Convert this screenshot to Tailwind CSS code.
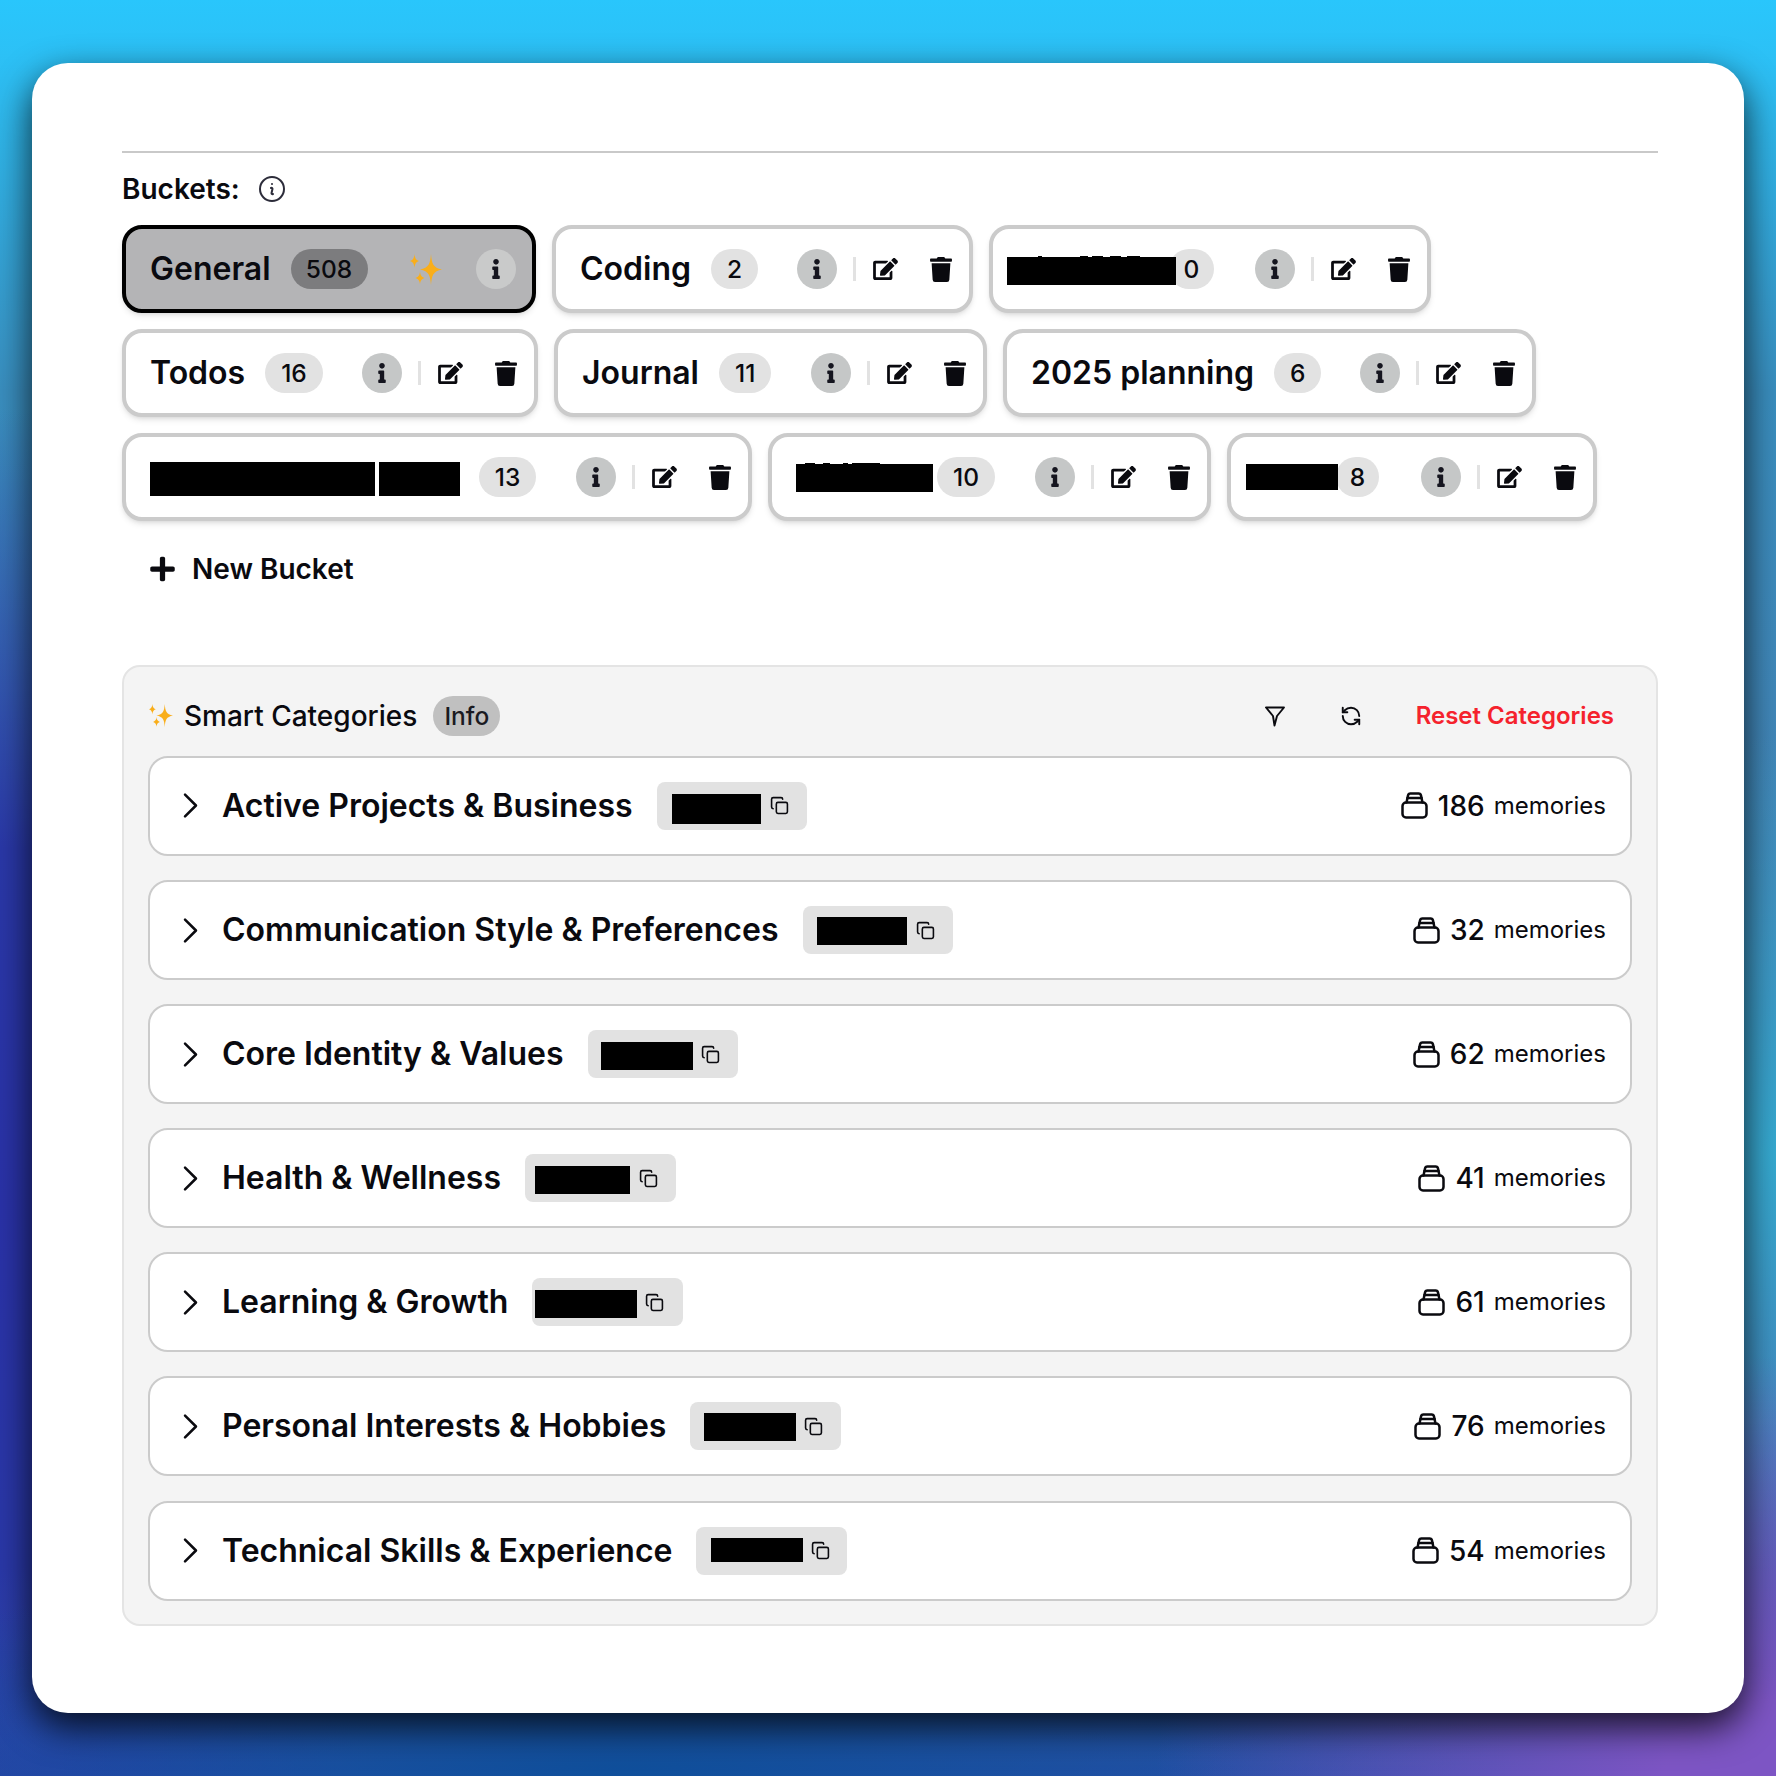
<!DOCTYPE html>
<html>
<head>
<meta charset="utf-8">
<script src="https://cdn.jsdelivr.net/npm/@tailwindcss/browser@4"></script>
</head>
<body class="m-0">
<svg class="hidden" xmlns="http://www.w3.org/2000/svg">
  <symbol id="fi" viewBox="0 0 192 512"><path fill="currentColor" d="M20 424.229h20V279.771H20c-11.046 0-20-8.954-20-20V212c0-11.046 8.954-20 20-20h112c11.046 0 20 8.954 20 20v212.229h20c11.046 0 20 8.954 20 20V492c0 11.046-8.954 20-20 20H20c-11.046 0-20-8.954-20-20v-47.771c0-11.046 8.954-20 20-20zM96 0C56.235 0 24 32.235 24 72s32.235 72 72 72 72-32.235 72-72S135.764 0 96 0z"/></symbol>
  <symbol id="fe" viewBox="0 0 576 512"><path fill="currentColor" d="M402.6 83.2l90.2 90.2c3.8 3.8 3.8 10 0 13.8L274.4 405.6l-92.8 10.3c-12.4 1.4-22.9-9.1-21.5-21.5l10.3-92.8L388.8 83.2c3.8-3.8 10-3.8 13.8 0zm162-22.9l-48.8-48.8c-15.2-15.2-39.9-15.2-55.2 0l-35.4 35.4c-3.8 3.8-3.8 10 0 13.8l90.2 90.2c3.8 3.8 10 3.8 13.8 0l35.4-35.4c15.2-15.3 15.2-40 0-55.2zM384 346.2V448H64V128h229.8c3.2 0 6.2-1.3 8.5-3.5l40-40c7.6-7.6 2.2-20.5-8.5-20.5H48C21.5 64 0 85.5 0 112v352c0 26.5 21.5 48 48 48h352c26.5 0 48-21.5 48-48V306.2c0-10.7-12.9-16-20.5-8.5l-40 40c-2.2 2.3-3.5 5.3-3.5 8.5z"/></symbol>
  <symbol id="ft" viewBox="0 0 448 512"><path fill="currentColor" d="M432 32H312l-9.4-18.7A24 24 0 0 0 281.1 0H166.8a23.72 23.72 0 0 0-21.4 13.3L136 32H16A16 16 0 0 0 0 48v32a16 16 0 0 0 16 16h416a16 16 0 0 0 16-16V48a16 16 0 0 0-16-16zM53.2 467a48 48 0 0 0 47.9 45h245.8a48 48 0 0 0 47.9-45L416 128H32z"/></symbol>
  <symbol id="sp" viewBox="0 0 32 31"><path fill="currentColor" d="M21 0 C21.8 10 23 13.5 32 15.5 C23 17.5 21.8 21 21 31 C20.2 21 19 17.5 10 15.5 C19 13.5 20.2 10 21 0Z M4.5 0 C4.9 4 5.6 5.6 9 7 C5.6 8.4 4.9 10 4.5 14 C4.1 10 3.4 8.4 0 7 C3.4 5.6 4.1 4 4.5 0Z M10 17.5 C10.3 21 11.2 22.6 14.5 24 C11.2 25.4 10.3 27 10 30.5 C9.7 27 8.8 25.4 5.5 24 C8.8 22.6 9.7 21 10 17.5Z"/></symbol>
  <symbol id="cv" viewBox="0 0 24 24"><path fill="none" stroke="currentColor" stroke-width="1.75" stroke-linecap="round" stroke-linejoin="round" d="m8.25 4.5 7.5 7.5-7.5 7.5"/></symbol>
  <symbol id="cp" viewBox="0 0 24 24"><g fill="none" stroke="currentColor" stroke-width="2" stroke-linecap="round" stroke-linejoin="round"><rect width="14" height="14" x="8" y="8" rx="2"/><path d="M4 16c-1.1 0-2-.9-2-2V4c0-1.1.9-2 2-2h10c1.1 0 2 .9 2 2"/></g></symbol>
  <symbol id="bk" viewBox="0 0 27 27"><g fill="none" stroke="currentColor" stroke-width="2.5" stroke-linecap="round" stroke-linejoin="round"><rect x="1.5" y="10.5" width="24" height="15" rx="3.5"/><path d="M5.5 10.5 L7 3.5 a2.5 2.5 0 0 1 2.5-2 h8 a2.5 2.5 0 0 1 2.5 2 L21.5 10.5"/><path d="M6.5 6 H20.5"/></g></symbol>
</svg>
<div class="w-[1776px] h-[1776px] pt-[63px] pl-[32px] font-['Inter',sans-serif] text-[#0a0a0f] bg-[radial-gradient(ellipse_620px_420px_at_100%_100%,#7d55c4_0%,#7d55c4_18%,transparent_100%),radial-gradient(ellipse_900px_230px_at_35%_100%,#0f4f9b_0%,transparent_100%),radial-gradient(ellipse_500px_800px_at_0%_68%,#2a32a8_0%,#2a38a8_45%,transparent_100%),radial-gradient(ellipse_300px_420px_at_100%_65%,#36abd2_0%,transparent_100%),linear-gradient(180deg,#29c6fc_0%,#2cc1f6_3%,#3a8fc0_22%,#4585b8_50%,#4a78b8_80%,#2a50a8_100%)]">
  <div class="w-[1712px] h-[1650px] bg-white rounded-[36px] shadow-[0_14px_36px_rgba(0,0,0,0.8)] pt-[88px] pl-[90px] pr-[86px]">
    <div class="h-[2px] bg-[#c9c9c9]"></div>

    <div class="flex items-center h-[34px] mt-[19px]">
      <span class="text-[28px] leading-none font-semibold">Buckets:</span>
      <svg class="w-[32px] h-[32px] ml-[16px] text-[#2c2c3a]" viewBox="0 0 24 24" fill="none" stroke="currentColor" stroke-width="1.5" stroke-linecap="round" stroke-linejoin="round"><path d="m11.25 11.25.041-.02a.75.75 0 0 1 1.063.852l-.708 2.836a.75.75 0 0 0 1.063.853l.041-.021M21 12a9 9 0 1 1-18 0 9 9 0 0 1 18 0Zm-9-3.75h.008v.008H12V8.25Z"/></svg>
    </div>

    <div class="flex flex-wrap gap-x-[16px] gap-y-[16.2px] mt-[19px]">
      <!-- General -->
      <div class="flex items-center w-[414px] h-[88px] pl-[24px] pr-[16px] border-[4px] border-black rounded-[20px] bg-[#b4b4b6] shadow-md">
        <span class="text-[32px] font-semibold leading-none">General</span>
        <span class="ml-[20px] h-[40px] w-[77px] flex items-center justify-center rounded-full bg-[#7c7c7e] text-[24.5px] font-medium">508</span>
        <svg class="ml-auto w-[32px] h-[31px] text-[#f9ae1a]"><use href="#sp"/></svg>
        <span class="ml-[34px] w-[40px] h-[40px] rounded-full bg-[#c9caca] flex items-center justify-center text-[#15151f]"><svg class="w-[8px] h-[20px]"><use href="#fi"/></svg></span>
      </div>
      <!-- Coding -->
      <div class="flex items-center w-[421px] h-[88px] pl-[24px] pr-[17px] border-[4px] border-[#cbcbcb] rounded-[20px] bg-white shadow-md">
        <span class="text-[32px] font-semibold leading-none">Coding</span>
        <span class="ml-[20px] h-[40px] px-[16px] flex items-center rounded-full bg-[#e2e2e2] text-[24.5px] font-medium">2</span>
        <div class="ml-auto flex items-center">
          <span class="w-[40px] h-[40px] rounded-full bg-[#c5c7c7] flex items-center justify-center text-[#15151f]"><svg class="w-[8px] h-[20px]"><use href="#fi"/></svg></span>
          <span class="ml-[16px] w-[3px] h-[24px] bg-[#e2e2e2]"></span>
          <svg class="ml-[17px] w-[25px] h-[22px]"><use href="#fe"/></svg>
          <svg class="ml-[32px] w-[22px] h-[25px]"><use href="#ft"/></svg>
        </div>
      </div>
      <!-- Redacted 0 -->
      <div class="flex items-center w-[442px] h-[88px] pl-[24px] pr-[17px] border-[4px] border-[#cbcbcb] rounded-[20px] bg-white shadow-md">
        <span class="relative z-10 -ml-[10px] mt-[4px] w-[169px] h-[28px] bg-black">
          <i class="absolute -top-[1.5px] left-[31px] w-[4px] h-[1.5px] bg-black"></i>
          <i class="absolute -top-[1.5px] left-[73px] w-[8px] h-[1.5px] bg-black"></i>
          <i class="absolute -top-[1.5px] left-[85px] w-[11px] h-[1.5px] bg-black"></i>
          <i class="absolute -top-[1.5px] left-[103px] w-[11px] h-[1.5px] bg-black"></i>
          <i class="absolute -top-[1.5px] left-[120px] w-[13px] h-[1.5px] bg-black"></i>
        </span>
        <span class="-ml-[7px] h-[40px] w-[45px] flex items-center justify-center rounded-full bg-[#e2e2e2] text-[24.5px] font-medium">0</span>
        <div class="ml-auto flex items-center">
          <span class="w-[40px] h-[40px] rounded-full bg-[#c5c7c7] flex items-center justify-center text-[#15151f]"><svg class="w-[8px] h-[20px]"><use href="#fi"/></svg></span>
          <span class="ml-[16px] w-[3px] h-[24px] bg-[#e2e2e2]"></span>
          <svg class="ml-[17px] w-[25px] h-[22px]"><use href="#fe"/></svg>
          <svg class="ml-[32px] w-[22px] h-[25px]"><use href="#ft"/></svg>
        </div>
      </div>
      <!-- Todos -->
      <div class="flex items-center w-[416px] h-[88px] pl-[24px] pr-[17px] border-[4px] border-[#cbcbcb] rounded-[20px] bg-white shadow-md">
        <span class="text-[32px] font-semibold leading-none">Todos</span>
        <span class="ml-[20px] h-[40px] px-[16px] flex items-center rounded-full bg-[#e2e2e2] text-[24.5px] font-medium">16</span>
        <div class="ml-auto flex items-center">
          <span class="w-[40px] h-[40px] rounded-full bg-[#c5c7c7] flex items-center justify-center text-[#15151f]"><svg class="w-[8px] h-[20px]"><use href="#fi"/></svg></span>
          <span class="ml-[16px] w-[3px] h-[24px] bg-[#e2e2e2]"></span>
          <svg class="ml-[17px] w-[25px] h-[22px]"><use href="#fe"/></svg>
          <svg class="ml-[32px] w-[22px] h-[25px]"><use href="#ft"/></svg>
        </div>
      </div>
      <!-- Journal -->
      <div class="flex items-center w-[433px] h-[88px] pl-[24px] pr-[17px] border-[4px] border-[#cbcbcb] rounded-[20px] bg-white shadow-md">
        <span class="text-[32px] font-semibold leading-none">Journal</span>
        <span class="ml-[20px] h-[40px] px-[16px] flex items-center rounded-full bg-[#e2e2e2] text-[24.5px] font-medium">11</span>
        <div class="ml-auto flex items-center">
          <span class="w-[40px] h-[40px] rounded-full bg-[#c5c7c7] flex items-center justify-center text-[#15151f]"><svg class="w-[8px] h-[20px]"><use href="#fi"/></svg></span>
          <span class="ml-[16px] w-[3px] h-[24px] bg-[#e2e2e2]"></span>
          <svg class="ml-[17px] w-[25px] h-[22px]"><use href="#fe"/></svg>
          <svg class="ml-[32px] w-[22px] h-[25px]"><use href="#ft"/></svg>
        </div>
      </div>
      <!-- 2025 planning -->
      <div class="flex items-center w-[533px] h-[88px] pl-[24px] pr-[17px] border-[4px] border-[#cbcbcb] rounded-[20px] bg-white shadow-md">
        <span class="text-[32px] font-semibold leading-none">2025 planning</span>
        <span class="ml-[20px] h-[40px] px-[16px] flex items-center rounded-full bg-[#e2e2e2] text-[24.5px] font-medium">6</span>
        <div class="ml-auto flex items-center">
          <span class="w-[40px] h-[40px] rounded-full bg-[#c5c7c7] flex items-center justify-center text-[#15151f]"><svg class="w-[8px] h-[20px]"><use href="#fi"/></svg></span>
          <span class="ml-[16px] w-[3px] h-[24px] bg-[#e2e2e2]"></span>
          <svg class="ml-[17px] w-[25px] h-[22px]"><use href="#fe"/></svg>
          <svg class="ml-[32px] w-[22px] h-[25px]"><use href="#ft"/></svg>
        </div>
      </div>
      <!-- Redacted 13 -->
      <div class="flex items-center w-[630px] h-[88px] pl-[24px] pr-[17px] border-[4px] border-[#cbcbcb] rounded-[20px] bg-white shadow-md">
        <span class="mt-[4px] w-[225px] h-[34px] bg-black"></span>
        <span class="ml-[4px] mt-[4px] w-[81px] h-[34px] bg-black"></span>
        <span class="ml-[19px] h-[40px] w-[57px] flex items-center justify-center rounded-full bg-[#e2e2e2] text-[24.5px] font-medium">13</span>
        <div class="ml-auto flex items-center">
          <span class="w-[40px] h-[40px] rounded-full bg-[#c5c7c7] flex items-center justify-center text-[#15151f]"><svg class="w-[8px] h-[20px]"><use href="#fi"/></svg></span>
          <span class="ml-[16px] w-[3px] h-[24px] bg-[#e2e2e2]"></span>
          <svg class="ml-[17px] w-[25px] h-[22px]"><use href="#fe"/></svg>
          <svg class="ml-[32px] w-[22px] h-[25px]"><use href="#ft"/></svg>
        </div>
      </div>
      <!-- Redacted 10 -->
      <div class="flex items-center w-[443px] h-[88px] pl-[24px] pr-[17px] border-[4px] border-[#cbcbcb] rounded-[20px] bg-white shadow-md">
        <span class="relative mt-[2px] w-[137px] h-[28px] bg-black">
          <i class="absolute -top-[1.5px] left-[9px] w-[10px] h-[1.5px] bg-black"></i>
          <i class="absolute -top-[1.5px] left-[27px] w-[7px] h-[1.5px] bg-black"></i>
          <i class="absolute -top-[1.5px] left-[47px] w-[5px] h-[1.5px] bg-black"></i>
          <i class="absolute -top-[1.5px] left-[56px] w-[28px] h-[1.5px] bg-black"></i>
        </span>
        <span class="ml-[4px] h-[40px] w-[58px] flex items-center justify-center rounded-full bg-[#e2e2e2] text-[24.5px] font-medium">10</span>
        <div class="ml-auto flex items-center">
          <span class="w-[40px] h-[40px] rounded-full bg-[#c5c7c7] flex items-center justify-center text-[#15151f]"><svg class="w-[8px] h-[20px]"><use href="#fi"/></svg></span>
          <span class="ml-[16px] w-[3px] h-[24px] bg-[#e2e2e2]"></span>
          <svg class="ml-[17px] w-[25px] h-[22px]"><use href="#fe"/></svg>
          <svg class="ml-[32px] w-[22px] h-[25px]"><use href="#ft"/></svg>
        </div>
      </div>
      <!-- Redacted 8 -->
      <div class="flex items-center w-[370px] h-[88px] pl-[15px] pr-[17px] border-[4px] border-[#cbcbcb] rounded-[20px] bg-white shadow-md">
        <span class="relative z-10 w-[92px] h-[26px] bg-black"></span>
        <span class="-ml-[2px] h-[40px] w-[43px] flex items-center justify-center rounded-full bg-[#e2e2e2] text-[24.5px] font-medium">8</span>
        <div class="ml-auto flex items-center">
          <span class="w-[40px] h-[40px] rounded-full bg-[#c5c7c7] flex items-center justify-center text-[#15151f]"><svg class="w-[8px] h-[20px]"><use href="#fi"/></svg></span>
          <span class="ml-[16px] w-[3px] h-[24px] bg-[#e2e2e2]"></span>
          <svg class="ml-[17px] w-[25px] h-[22px]"><use href="#fe"/></svg>
          <svg class="ml-[32px] w-[22px] h-[25px]"><use href="#ft"/></svg>
        </div>
      </div>
    </div>

    <div class="flex items-center h-[34px] mt-[30.6px] pl-[28px]">
      <svg class="w-[25px] h-[28px]" viewBox="0 0 448 512"><path fill="currentColor" d="M416 208H272V64c0-17.67-14.33-32-32-32h-32c-17.67 0-32 14.33-32 32v144H32c-17.67 0-32 14.33-32 32v32c0 17.67 14.33 32 32 32h144v144c0 17.67 14.33 32 32 32h32c17.67 0 32-14.33 32-32V304h144c17.67 0 32-14.33 32-32v-32c0-17.67-14.33-32-32-32z"/></svg>
      <span class="ml-[17px] text-[28px] font-semibold leading-none">New Bucket</span>
    </div>

    <div class="mt-[79px] h-[961px] border-[2px] border-[#e4e4e4] rounded-[18px] bg-[#f4f4f4] pt-[29px] px-[24px]">
      <div class="flex items-center h-[40px]">
        <svg class="ml-[1px] w-[24px] h-[25px] text-[#f9ae1a]"><use href="#sp"/></svg>
        <span class="ml-[11px] text-[28px] font-medium leading-none">Smart Categories</span>
        <span class="ml-[16px] h-[40px] w-[67px] flex items-center justify-center rounded-full bg-[#c0c0c0] text-[24.5px] font-medium text-[#1a1a22]">Info</span>
        <svg class="ml-auto w-[22px] h-[22px]" viewBox="0 0 22 22" fill="none" stroke="currentColor" stroke-width="1.9" stroke-linecap="round" stroke-linejoin="round"><path d="M2 2.5 H20 L13 11 L10.5 20.5 L9 11 Z"/></svg>
        <svg class="ml-[54px] w-[22px] h-[22px]" viewBox="0 0 24 24" fill="none" stroke="currentColor" stroke-width="2.1" stroke-linecap="round" stroke-linejoin="round"><path d="M21 12a9 9 0 0 0-9-9 9.75 9.75 0 0 0-6.74 2.74L3 8"/><path d="M3 3v5h5"/><path d="M3 12a9 9 0 0 0 9 9 9.75 9.75 0 0 0 6.74-2.74L21 16"/><path d="M16 16h5v5"/></svg>
        <span class="ml-[54px] mr-[18px] text-[24px] font-semibold text-[#f5222d] leading-none">Reset Categories</span>
      </div>

      <div class="flex flex-col gap-[24.1px] mt-[20px]">
        <div class="flex items-center h-[100px] border-[2.5px] border-[#cbcbcb] rounded-[20px] bg-white pl-[23px] pr-[24px]">
          <svg class="w-[35px] h-[35px]"><use href="#cv"/></svg>
          <span class="ml-[14px] text-[32px] font-semibold leading-none">Active Projects &amp; Business</span>
          <span class="ml-[24px] h-[48px] w-[150px] flex items-center pl-[15px] rounded-[8px] bg-[#e2e2e2]"><span class="mt-[6px] w-[89px] h-[30px] bg-black"></span><svg class="ml-[9px] w-[19px] h-[19px]"><use href="#cp"/></svg></span>
          <svg class="ml-auto w-[27px] h-[27px]"><use href="#bk"/></svg>
          <span class="ml-[10px] text-[28px] font-medium leading-none">186</span>
          <span class="ml-[9px] text-[24px] leading-none font-normal">memories</span>
        </div>
        <div class="flex items-center h-[100px] border-[2.5px] border-[#cbcbcb] rounded-[20px] bg-white pl-[23px] pr-[24px]">
          <svg class="w-[35px] h-[35px]"><use href="#cv"/></svg>
          <span class="ml-[14px] text-[32px] font-semibold leading-none">Communication Style &amp; Preferences</span>
          <span class="ml-[24px] h-[48px] w-[150px] flex items-center pl-[14px] rounded-[8px] bg-[#e2e2e2]"><span class="mt-[2px] w-[90px] h-[28px] bg-black"></span><svg class="ml-[9px] w-[19px] h-[19px]"><use href="#cp"/></svg></span>
          <svg class="ml-auto w-[27px] h-[27px]"><use href="#bk"/></svg>
          <span class="ml-[10px] text-[28px] font-medium leading-none">32</span>
          <span class="ml-[9px] text-[24px] leading-none font-normal">memories</span>
        </div>
        <div class="flex items-center h-[100px] border-[2.5px] border-[#cbcbcb] rounded-[20px] bg-white pl-[23px] pr-[24px]">
          <svg class="w-[35px] h-[35px]"><use href="#cv"/></svg>
          <span class="ml-[14px] text-[32px] font-semibold leading-none">Core Identity &amp; Values</span>
          <span class="ml-[24px] h-[48px] w-[150px] flex items-center pl-[13px] rounded-[8px] bg-[#e2e2e2]"><span class="mt-[3px] w-[92px] h-[28px] bg-black"></span><svg class="ml-[8px] w-[19px] h-[19px]"><use href="#cp"/></svg></span>
          <svg class="ml-auto w-[27px] h-[27px]"><use href="#bk"/></svg>
          <span class="ml-[10px] text-[28px] font-medium leading-none">62</span>
          <span class="ml-[9px] text-[24px] leading-none font-normal">memories</span>
        </div>
        <div class="flex items-center h-[100px] border-[2.5px] border-[#cbcbcb] rounded-[20px] bg-white pl-[23px] pr-[24px]">
          <svg class="w-[35px] h-[35px]"><use href="#cv"/></svg>
          <span class="ml-[14px] text-[32px] font-semibold leading-none">Health &amp; Wellness</span>
          <span class="ml-[24px] h-[48px] w-[151px] flex items-center pl-[10px] rounded-[8px] bg-[#e2e2e2]"><span class="mt-[3px] w-[95px] h-[28px] bg-black"></span><svg class="ml-[9px] w-[19px] h-[19px]"><use href="#cp"/></svg></span>
          <svg class="ml-auto w-[27px] h-[27px]"><use href="#bk"/></svg>
          <span class="ml-[10px] text-[28px] font-medium leading-none">41</span>
          <span class="ml-[9px] text-[24px] leading-none font-normal">memories</span>
        </div>
        <div class="flex items-center h-[100px] border-[2.5px] border-[#cbcbcb] rounded-[20px] bg-white pl-[23px] pr-[24px]">
          <svg class="w-[35px] h-[35px]"><use href="#cv"/></svg>
          <span class="ml-[14px] text-[32px] font-semibold leading-none">Learning &amp; Growth</span>
          <span class="ml-[24px] h-[48px] w-[151px] flex items-center pl-[3px] rounded-[8px] bg-[#e2e2e2]"><span class="mt-[3px] w-[102px] h-[28px] bg-black"></span><svg class="ml-[8px] w-[19px] h-[19px]"><use href="#cp"/></svg></span>
          <svg class="ml-auto w-[27px] h-[27px]"><use href="#bk"/></svg>
          <span class="ml-[10px] text-[28px] font-medium leading-none">61</span>
          <span class="ml-[9px] text-[24px] leading-none font-normal">memories</span>
        </div>
        <div class="flex items-center h-[100px] border-[2.5px] border-[#cbcbcb] rounded-[20px] bg-white pl-[23px] pr-[24px]">
          <svg class="w-[35px] h-[35px]"><use href="#cv"/></svg>
          <span class="ml-[14px] text-[32px] font-semibold leading-none">Personal Interests &amp; Hobbies</span>
          <span class="ml-[24px] h-[48px] w-[151px] flex items-center pl-[14px] rounded-[8px] bg-[#e2e2e2]"><span class="mt-[2px] w-[92px] h-[28px] bg-black"></span><svg class="ml-[8px] w-[19px] h-[19px]"><use href="#cp"/></svg></span>
          <svg class="ml-auto w-[27px] h-[27px]"><use href="#bk"/></svg>
          <span class="ml-[10px] text-[28px] font-medium leading-none">76</span>
          <span class="ml-[9px] text-[24px] leading-none font-normal">memories</span>
        </div>
        <div class="flex items-center h-[100px] border-[2.5px] border-[#cbcbcb] rounded-[20px] bg-white pl-[23px] pr-[24px]">
          <svg class="w-[35px] h-[35px]"><use href="#cv"/></svg>
          <span class="ml-[14px] text-[32px] font-semibold leading-none">Technical Skills &amp; Experience</span>
          <span class="ml-[24px] h-[48px] w-[151px] flex items-center pl-[15px] rounded-[8px] bg-[#e2e2e2]"><span class="-mt-[2px] w-[92px] h-[24px] bg-black"></span><svg class="ml-[8px] w-[19px] h-[19px]"><use href="#cp"/></svg></span>
          <svg class="ml-auto w-[27px] h-[27px]"><use href="#bk"/></svg>
          <span class="ml-[10px] text-[28px] font-medium leading-none">54</span>
          <span class="ml-[9px] text-[24px] leading-none font-normal">memories</span>
        </div>
      </div>
    </div>
  </div>
</div>
</body>
</html>
